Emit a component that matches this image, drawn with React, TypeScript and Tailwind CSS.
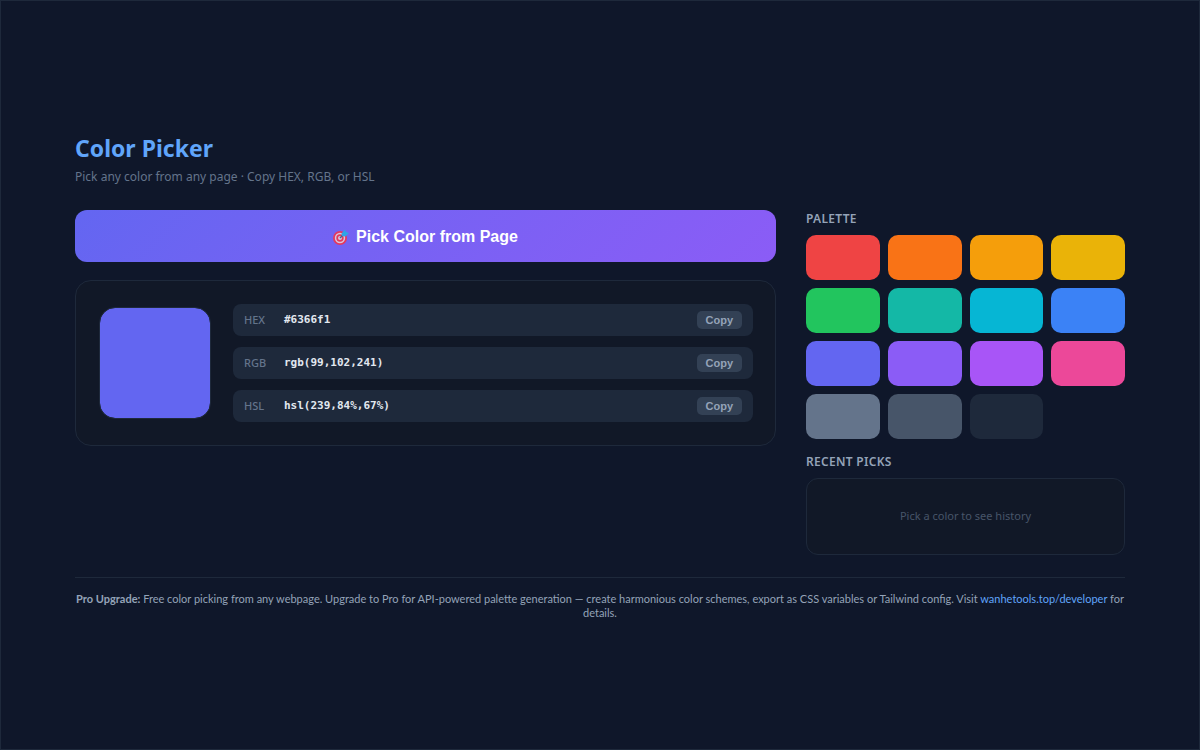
import React, { useState } from 'react'

type Format = { label: string; value: string }

const PALETTE = [
  { name: 'Red', color: 'bg-[#ef4444]', hex: '#ef4444' },
  { name: 'Orange', color: 'bg-[#f97316]', hex: '#f97316' },
  { name: 'Amber', color: 'bg-[#f59e0b]', hex: '#f59e0b' },
  { name: 'Yellow', color: 'bg-[#eab308]', hex: '#eab308' },
  { name: 'Green', color: 'bg-[#22c55e]', hex: '#22c55e' },
  { name: 'Teal', color: 'bg-[#14b8a6]', hex: '#14b8a6' },
  { name: 'Cyan', color: 'bg-[#06b6d4]', hex: '#06b6d4' },
  { name: 'Blue', color: 'bg-[#3b82f6]', hex: '#3b82f6' },
  { name: 'Indigo', color: 'bg-[#6366f1]', hex: '#6366f1' },
  { name: 'Violet', color: 'bg-[#8b5cf6]', hex: '#8b5cf6' },
  { name: 'Purple', color: 'bg-[#a855f7]', hex: '#a855f7' },
  { name: 'Pink', color: 'bg-[#ec4899]', hex: '#ec4899' },
  { name: 'Slate', color: 'bg-[#64748b]', hex: '#64748b' },
  { name: 'Dark slate', color: 'bg-[#475569]', hex: '#475569' },
  { name: 'Midnight', color: 'bg-[#1e293b]', hex: '#1e293b' },
]

const toFormats = (hex: string): Format[] => {
  const [r, g, b] = [1, 3, 5].map((i) => parseInt(hex.slice(i, i + 2), 16))
  const max = Math.max(r, g, b) / 255
  const min = Math.min(r, g, b) / 255
  const l = (max + min) / 2
  const d = max - min
  let h = 0
  let s = 0
  if (d > 0) {
    s = d / (1 - Math.abs(2 * l - 1))
    if (max === r / 255) h = ((g - b) / 255 / d + 6) % 6
    else if (max === g / 255) h = (b - r) / 255 / d + 2
    else h = (r - g) / 255 / d + 4
  }
  return [
    { label: 'HEX', value: hex },
    { label: 'RGB', value: `rgb(${r},${g},${b})` },
    { label: 'HSL', value: `hsl(${Math.round(h * 60)},${Math.round(s * 100)}%,${Math.round(l * 100)}%)` },
  ]
}

const TargetIcon: React.FC = () => (
  <svg viewBox="0 0 32 32" className="size-4" aria-hidden="true">
    <circle cx="14" cy="18" r="14" fill="#e5395d" />
    <circle cx="14" cy="18" r="10.4" fill="#d9c4dc" />
    <circle cx="14" cy="18" r="7.4" fill="#e5395d" />
    <circle cx="14" cy="18" r="4" fill="#d9c4dc" />
    <path d="M14 18 L23 9" stroke="#4c6186" strokeWidth="3" />
    <path d="M17 9 L24 1 L26 6 L32 8 L25 15 L18 14 Z" fill="#2ea4e8" />
  </svg>
)

const FormatRow: React.FC<Format> = ({ label, value }) => (
  <div className="flex h-8 items-center rounded-lg bg-[#1e293b] px-[11px]">
    <span className="w-10 text-[11px] font-medium text-[#64748b]">{label}</span>
    <span className="flex-1 font-['DejaVu_Sans_Mono',monospace] text-[11px] font-bold text-[#e2e8f0]">{value}</span>
    <button
      type="button"
      className="h-[18px] cursor-pointer rounded-[5px] bg-[#334155] px-[9px] font-['Liberation_Sans',sans-serif] text-[11px] font-bold text-[#94a3b8] hover:bg-[#475569]"
      onClick={() => navigator.clipboard?.writeText(value)}
    >
      Copy
    </button>
  </div>
)

const App: React.FC = () => {
  const [color, setColor] = useState('#6366f1')

  const pickColor = async () => {
    const EyeDropper = (window as any).EyeDropper
    if (!EyeDropper) return
    try {
      const result = await new EyeDropper().open()
      setColor(result.sRGBHex)
    } catch {
      // cancelled with escape
    }
  }

  return (
    <div className="flex min-h-screen flex-col justify-center border border-[#1e293b] bg-[#0f172a] px-[74px] font-['Noto_Sans',sans-serif]">
      <header className="mb-[22px]">
        <h1 className="text-[23px] leading-9 font-bold text-[#60a5fa]">Color Picker</h1>
        <p className="text-xs leading-[22px] text-[#64748b]">Pick any color from any page · Copy HEX, RGB, or HSL</p>
      </header>

      <div className="flex gap-[30px]">
        <main className="flex-1">
          <button
            type="button"
            className="flex h-[52px] w-full cursor-pointer items-center justify-center gap-[7px] rounded-xl bg-linear-135 from-[#6366f1] to-[#8b5cf6] pt-0.5 font-['Liberation_Sans',sans-serif] text-base font-bold text-white"
            onClick={pickColor}
          >
            <TargetIcon />
            Pick Color from Page
          </button>

          <section className="mt-[18px] flex items-center gap-[22px] rounded-2xl border border-[#1e293b] bg-[#111827] py-[23px] pr-[22px] pl-[23px]">
            <div
              className="size-28 rounded-2xl border border-[#1e293b] bg-clip-padding"
              style={{ backgroundColor: color }}
            />
            <div className="flex flex-1 flex-col gap-[11px]">
              {toFormats(color).map((f) => (
                <FormatRow key={f.label} {...f} />
              ))}
            </div>
          </section>
        </main>

        <aside className="w-[319px]">
          <h2 className="mb-[7px] text-xs leading-[18px] font-semibold tracking-wide text-[#94a3b8]">PALETTE</h2>
          <div className="grid grid-cols-4 gap-2">
            {PALETTE.map((p) => (
              <button
                key={p.hex}
                type="button"
                aria-label={p.name}
                className={`h-[45px] cursor-pointer rounded-[10px] ${p.color}`}
                onClick={() => setColor(p.hex)}
              />
            ))}
          </div>

          <h2 className="mt-[14px] mb-[7px] text-xs leading-[18px] font-semibold tracking-wide text-[#94a3b8]">RECENT PICKS</h2>
          <div className="flex h-[77px] items-center justify-center rounded-xl border border-[#1e293b] bg-[#111827] text-[11px] text-[#475569]">
            Pick a color to see history
          </div>
        </aside>
      </div>

      <footer className="mt-[22px] border-t border-[#1e293b] pt-[14px] text-center font-['Lato',sans-serif] text-[11px] leading-[14px] text-[#94a3b8]">
        <strong>Pro Upgrade:</strong> Free color picking from any webpage. Upgrade to Pro for API-powered palette generation — create harmonious color schemes, export as CSS variables or Tailwind config. Visit{' '}
        <a href="https://wanhetools.top/developer" className="text-[#60a5fa]">wanhetools.top/developer</a> for details.
      </footer>
    </div>
  )
}

export default App
